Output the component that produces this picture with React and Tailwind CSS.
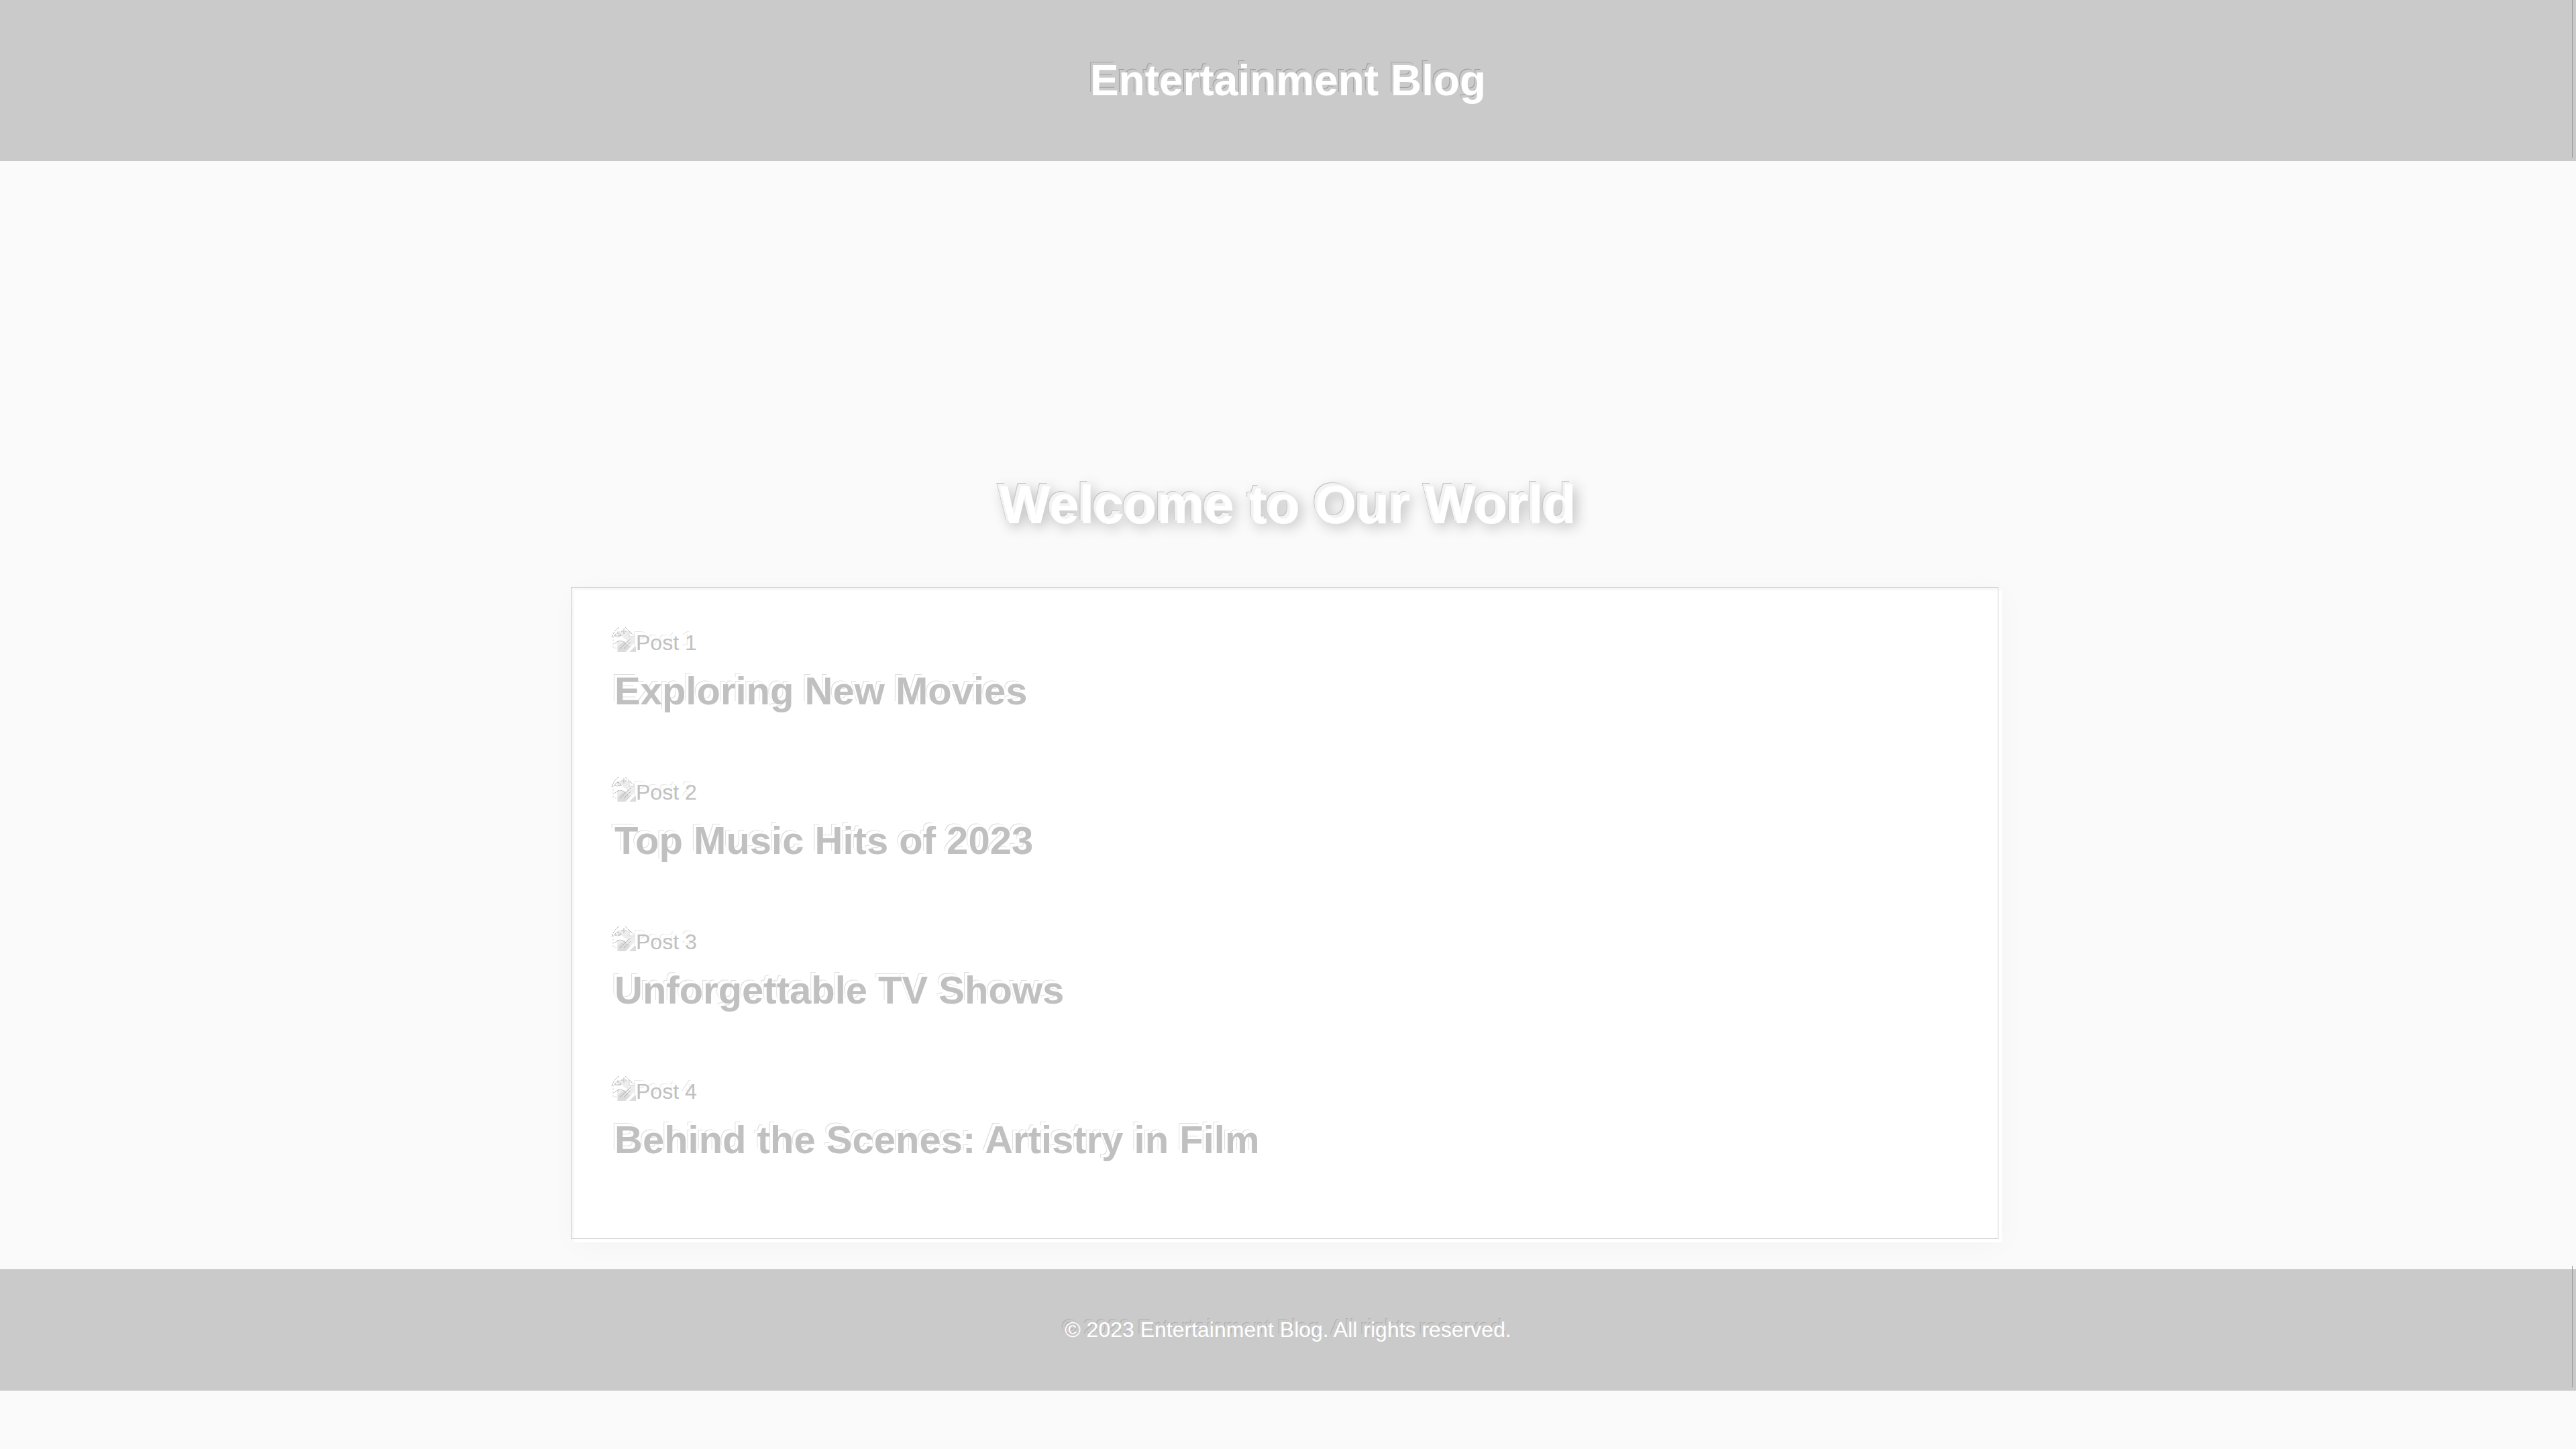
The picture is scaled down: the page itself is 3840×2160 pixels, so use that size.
const posts = [
  { label: 'Post 1', title: 'Exploring New Movies' },
  { label: 'Post 2', title: 'Top Music Hits of 2023' },
  { label: 'Post 3', title: 'Unforgettable TV Shows' },
  { label: 'Post 4', title: 'Behind the Scenes: Artistry in Film' },
];

function MissingImage() {
  return (
    <svg aria-hidden="true" viewBox="0 0 32 32" className="size-8 shrink-0 overflow-visible" fill="none">
      <path d="M4 1H23L31 9V17L17 32H4Z" fill="#ededed" />
      <path d="M4 14a5 5 0 0 1 10-2a5 5 0 0 1 5 4H4Z" fill="#ffffff" />
      <path d="M5 32V25Q12 14 20 21L24 24L16 32Z" fill="#dcdcdc" />
      <path d="M22 32L32 22V32Z" fill="#dcdcdc" />
      <path d="M22 1V9H31Z" fill="#fff" stroke="#d4d4d4" />
      <path d="M-4 10Q-1 0 7 -5M16 -5L26 5M14 -3V5M10 1H18" stroke="#b4b4b4" strokeDasharray="4 1" />
      <path d="M0 8Q5 -1 10 8ZM0 20Q8 11 16 19M8 27L24 12M14 27L24 17" stroke="#a8a8a8" strokeDasharray="4 1" />
      <path d="M-2 8V26H15" stroke="#d8d8d8" strokeDasharray="3 2" />
    </svg>
  );
}

export default function App() {
  return (
    <div className="min-h-screen bg-[#fafafa] font-['Liberation_Sans',Arial,sans-serif] text-[32px] leading-[37px] text-[#c0c0c0]">
      <header className="relative bg-[#cacaca] px-10 py-[83px] text-center text-white after:absolute after:top-0 after:right-[5px] after:bottom-[5px] after:w-px after:bg-[#999999]">
        <h1 className="text-[64px] leading-[74px] font-bold [text-shadow:-3px_-4px_#cacaca,-4px_-5px_#a0a0a0]">
          Entertainment Blog
        </h1>
      </header>
      <section className="flex h-[600px] items-end justify-center pb-[41px]">
        <h2 className="text-[80px] leading-[92px] font-bold text-white [text-shadow:-4px_-4px_#f3f3f3,-5px_-5px_#c4c4c4,4px_4px_20px_rgba(0,0,0,0.3)]">
          Welcome to Our World
        </h2>
      </section>
      <main className="relative mx-auto my-10 max-w-[2128px] bg-white px-[60px] pt-[60px] pb-5 shadow-[0_4px_40px_rgba(0,0,0,0.03)] before:pointer-events-none before:absolute before:-top-[5px] before:right-[5px] before:bottom-[5px] before:-left-[5px] before:border before:border-[#cccccc]">
        {posts.map((post) => (
          <article key={post.label} className="mb-10 h-[183px]">
            <div className="flex h-[37px] items-start">
              <MissingImage />
              <span className="[text-shadow:-4px_-5px_#ffffff,-5px_-6px_#e8e8e8]">{post.label}</span>
            </div>
            <h3 className="mt-5 text-[58px] leading-[66px] font-bold [text-shadow:-4px_-4px_#ffffff,-5px_-5px_#dedede]">
              {post.title}
            </h3>
          </article>
        ))}
      </main>
      <footer className="relative bg-[#cacaca] px-10 py-[72px] text-center text-white after:absolute after:-top-[5px] after:right-[5px] after:bottom-[5px] after:w-px after:bg-[#999999]">
        <p className="[text-shadow:-4px_-4px_#cacaca,-5px_-5px_#b0b0b0]">© 2023 Entertainment Blog. All rights reserved.</p>
      </footer>
    </div>
  );
}
